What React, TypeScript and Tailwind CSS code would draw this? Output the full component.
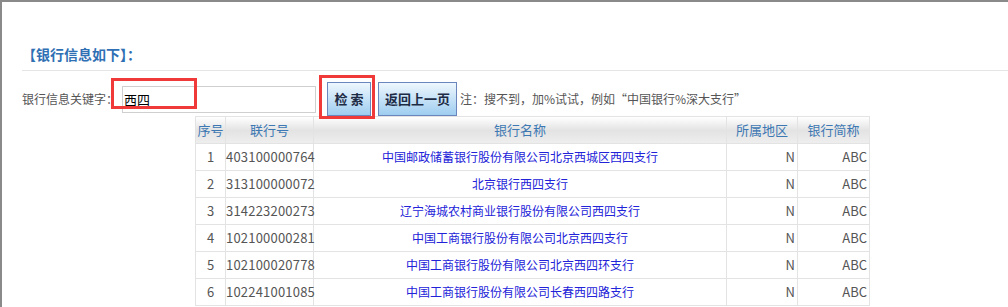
import React from 'react';

const rows = [
  ['1', '403100000764', '中国邮政储蓄银行股份有限公司北京西城区西四支行'],
  ['2', '313100000072', '北京银行西四支行'],
  ['3', '314223200273', '辽宁海城农村商业银行股份有限公司西四支行'],
  ['4', '102100000281', '中国工商银行股份有限公司北京西四支行'],
  ['5', '102100020778', '中国工商银行股份有限公司北京西四环支行'],
  ['6', '102241001085', '中国工商银行股份有限公司长春西四路支行'],
];

const font = { fontFamily: '"Noto Sans CJK SC", "Noto Sans", sans-serif' };

export default function App() {
  return (
    <div
      className="h-[307px] w-[1008px] overflow-hidden border-t-2 border-l-2 border-[#8a8a8a] bg-white text-[12px] text-[#555]"
      style={font}
    >
      <div className="pl-5 pt-[41px]">
        <div className="border-b border-[#e5e5e5] pb-[5px] text-[14px] font-bold leading-[22px] text-[#2f6fb4]">
          【银行信息如下】：
        </div>

        <div className="relative mt-[10px] flex h-[36px] items-center">
          <span className="w-[100px] shrink-0 leading-[20px]">银行信息关键字：</span>
          <input
            readOnly
            value="西四"
            className="h-[27px] w-[194px] border border-[#cfcfcf] px-[1px] text-[13px] text-black outline-none"
            style={font}
          />
          <button className="ml-[11px] h-[34px] w-[44px] border border-[#6a86bd] bg-gradient-to-b from-[#eef7fd] to-[#9ecdf0] text-[13px] font-bold text-[#1d2b45]">
            检 索
          </button>
          <button className="ml-[7px] h-[34px] w-[79px] border border-[#6a86bd] bg-gradient-to-b from-[#eef7fd] to-[#9ecdf0] text-[13px] font-bold text-[#1d2b45]">
            返回上一页
          </button>
          <span className="ml-[3px] leading-[20px]">注：搜不到，加%试试，例如“中国银行%深大支行”</span>

          <div className="pointer-events-none absolute left-[89px] top-[-3px] h-[31px] w-[86px] border-[3px] border-[#f03a3a]" />
          <div className="pointer-events-none absolute left-[297px] top-[-6px] h-[44px] w-[56px] border-[3px] border-[#f03a3a]" />
        </div>

        <table className="ml-[173px] mt-[-1px] w-[674px] table-fixed border-collapse">
          <colgroup>
            <col className="w-[30px]" />
            <col className="w-[88px]" />
            <col className="w-[413px]" />
            <col className="w-[71px]" />
            <col className="w-[72px]" />
          </colgroup>
          <thead>
            <tr className="h-[27px] bg-gradient-to-b from-white via-[#e3e3e3] to-[#efefef] text-[13px] font-normal text-[#3d78b3]">
              <th className="border border-[#e3e3e3] p-0 text-center font-normal">序号</th>
              <th className="border border-[#e3e3e3] p-0 text-center font-normal">联行号</th>
              <th className="border border-[#e3e3e3] p-0 text-center font-normal">银行名称</th>
              <th className="border border-[#e3e3e3] p-0 text-center font-normal">所属地区</th>
              <th className="border border-[#e3e3e3] p-0 text-center font-normal">银行简称</th>
            </tr>
          </thead>
          <tbody>
            {rows.map((r) => (
              <tr key={r[0]} className="h-[27px]">
                <td className="border border-[#e3e3e3] p-0 text-center text-[13px]">{r[0]}</td>
                <td className="border border-[#e3e3e3] p-0 text-center text-[13px] tracking-[0.2px]">{r[1]}</td>
                <td className="border border-[#e3e3e3] p-0 text-center text-[#2222d8]">{r[2]}</td>
                <td className="border border-[#e3e3e3] p-0 pr-[2px] text-right text-[13px]">N</td>
                <td className="border border-[#e3e3e3] p-0 pr-[2px] text-right text-[13px]">ABC</td>
              </tr>
            ))}
          </tbody>
        </table>
      </div>
    </div>
  );
}
